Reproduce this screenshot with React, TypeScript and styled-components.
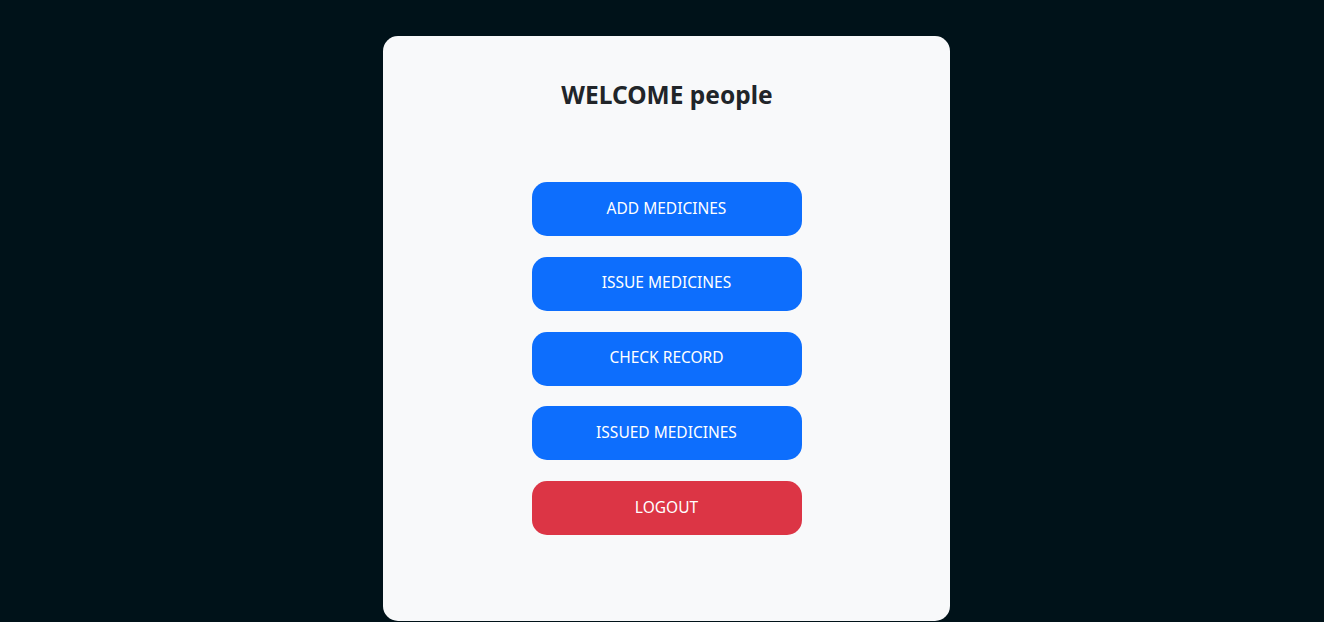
import React from "react";
import styled, { createGlobalStyle } from "styled-components";

const Global = createGlobalStyle`
  html, body { margin: 0; padding: 0; background: #001219; }
  body { font-family: "Noto Sans", "Open Sans", sans-serif; overflow: hidden; }
`;

const Page = styled.div`
  min-height: 622px;
  padding-top: 36px;
  box-sizing: border-box;
`;

const Card = styled.div`
  width: 567px;
  height: 585px;
  margin-left: 383px;
  background: #f8f9fa;
  border-radius: 15px;
  box-sizing: border-box;
  padding-top: 42px;
  display: flex;
  flex-direction: column;
  align-items: center;
`;

const Title = styled.h4`
  margin: 0;
  font-size: 24.5px;
  font-weight: 700;
  line-height: 34px;
  color: #212529;
  padding-left: 1px;
`;

const Buttons = styled.div`
  margin-top: 70px;
  display: flex;
  flex-direction: column;
  gap: 20.75px;
  align-items: center;
`;

const Btn = styled.button<{ $danger?: boolean }>`
  width: 270px;
  height: 54px;
  padding: 0 0 3px;
  border: none;
  border-radius: 15px;
  background: ${(p) => (p.$danger ? "#dc3545" : "#0d6efd")};
  color: #fff;
  font-family: "Noto Sans", "Open Sans", sans-serif;
  font-size: 15.5px;
  cursor: pointer;
`;

export default function App() {
  return (
    <>
      <Global />
      <Page>
        <Card>
          <Title>WELCOME people</Title>
          <Buttons>
            <Btn>ADD MEDICINES</Btn>
            <Btn>ISSUE MEDICINES</Btn>
            <Btn>CHECK RECORD</Btn>
            <Btn>ISSUED MEDICINES</Btn>
            <Btn $danger>LOGOUT</Btn>
          </Buttons>
        </Card>
      </Page>
    </>
  );
}
